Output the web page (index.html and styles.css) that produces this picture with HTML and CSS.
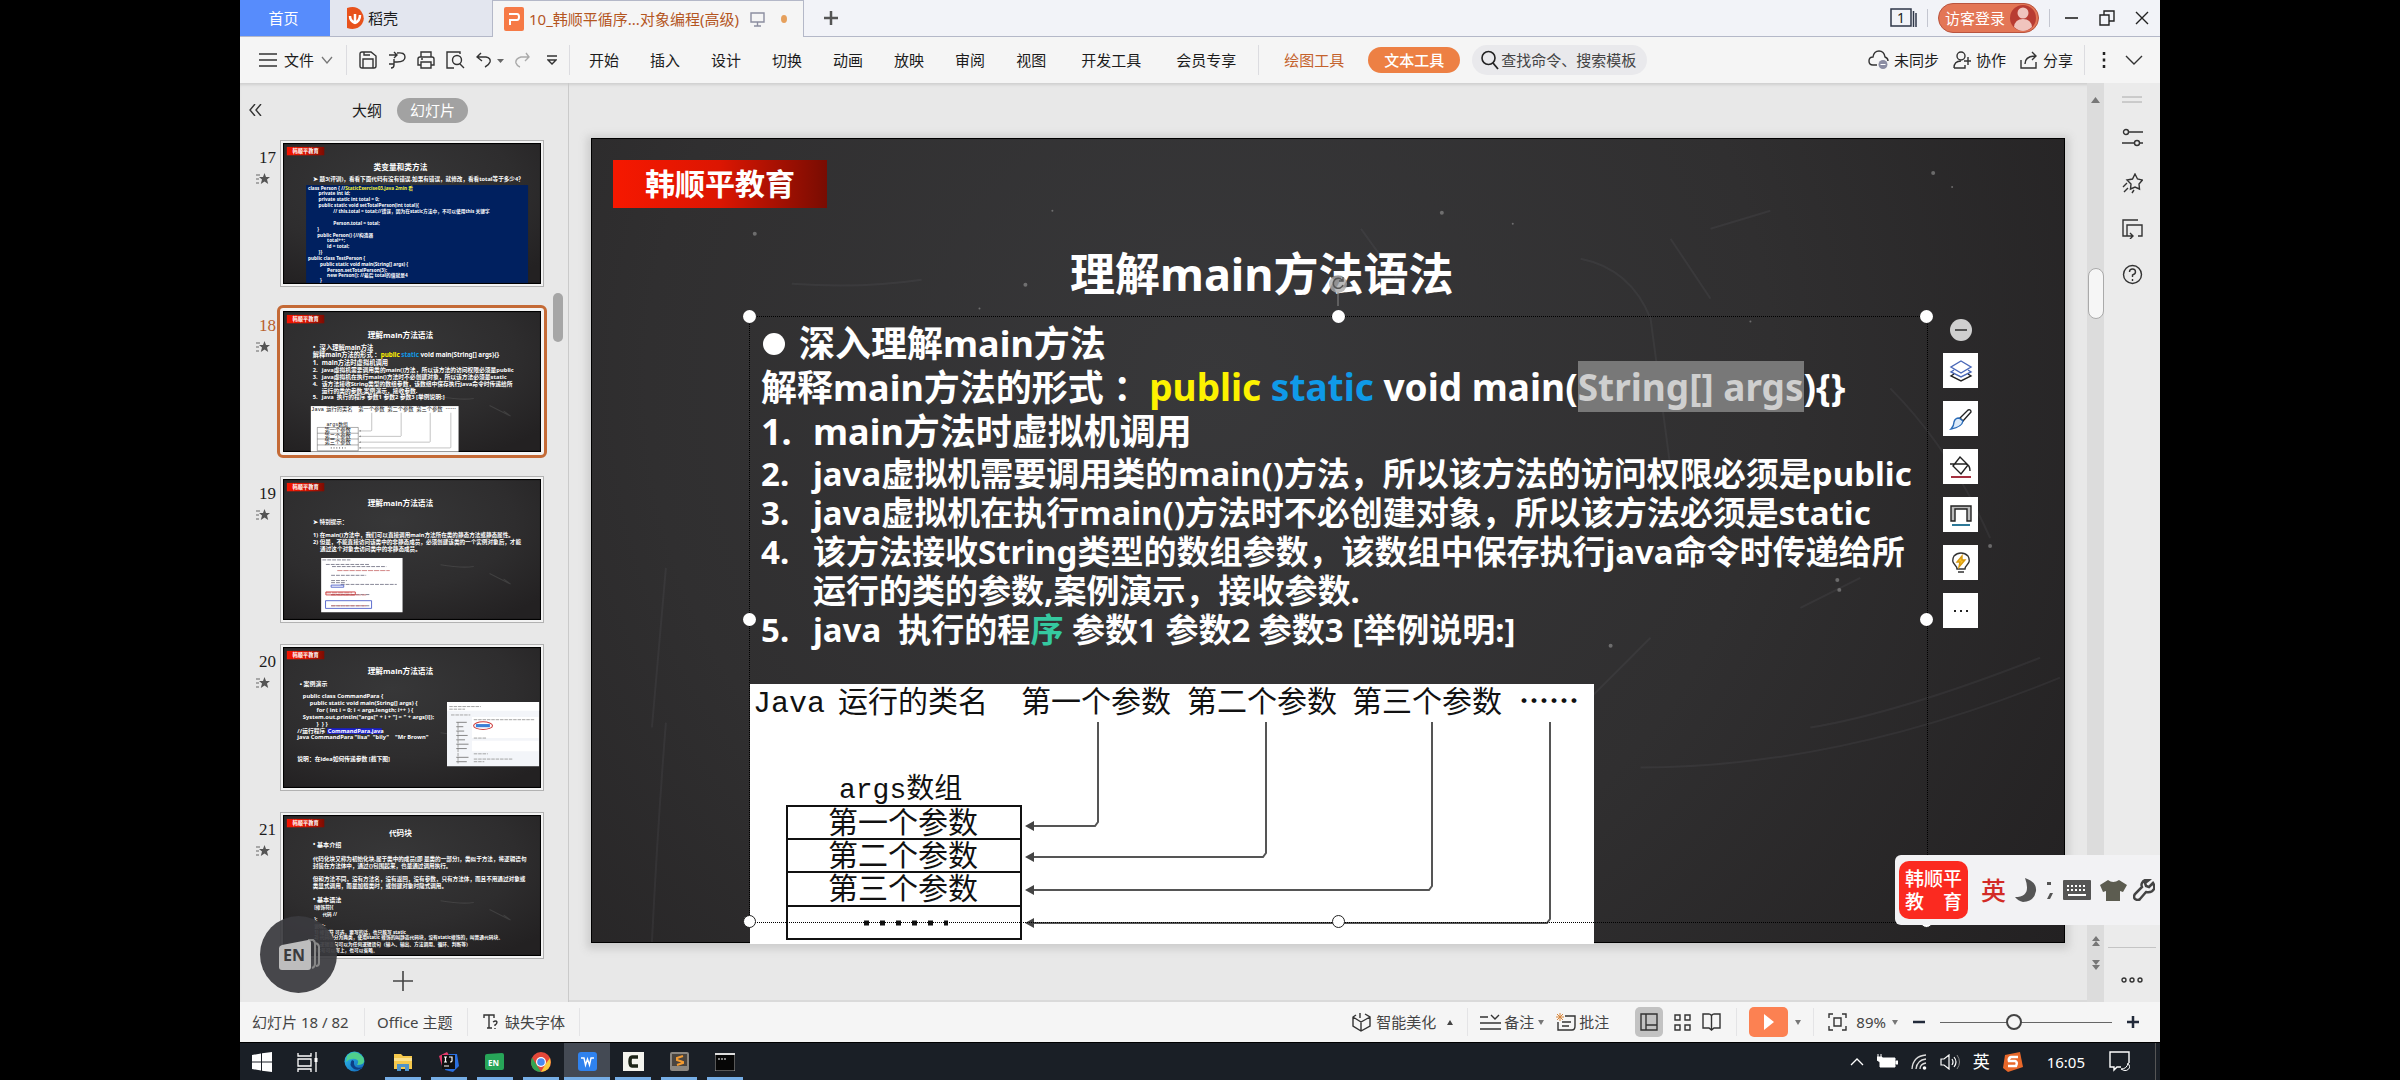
FILE: index.html
```html
<!DOCTYPE html>
<html lang="zh-CN">
<head>
<meta charset="utf-8">
<title>10_韩顺平循序...对象编程(高级)</title>
<link rel="stylesheet" href="styles.css">
</head>
<body>
<svg class="defs" aria-hidden="true">
  <defs>
    <linearGradient id="logo-fill"><stop offset="0" stop-color="#f41500"/><stop offset=".5" stop-color="#d81400"/><stop offset="1" stop-color="#7c0c02"/></linearGradient>
    <radialGradient id="board" cx=".42" cy=".3" r=".8"><stop offset="0" stop-color="#373738"/><stop offset=".6" stop-color="#2e2d2e"/><stop offset="1" stop-color="#232122"/></radialGradient>
    <linearGradient id="edge-blue" x1="0" y1="0" x2="1" y2="1"><stop offset="0" stop-color="#2fc3ee"/><stop offset="1" stop-color="#1160b8"/></linearGradient>
  </defs>
  <symbol id="thumb-base" viewBox="0 0 1474 805">
    <rect width="1474" height="805" fill="url(#board)" stroke="#000" stroke-width="12"/>
    <path d="M900 490q120 20 190 10M1180 540l120 60-40-30" stroke="#555" stroke-width="6" fill="none" opacity=".5"/>
    <rect x="22" y="22" width="214" height="48" fill="url(#logo-fill)"/>
  </symbol>
  <symbol id="anim-star" viewBox="0 0 14 12"><path d="M0 2h4M0 6h3M0 10h3" stroke="#666" stroke-width="1"/><path d="M8.500 0l1.500 4h4l-3 2.600 1.200 4.400-3.700-2.600L4.800 11 6 6.600 3 4h4z" fill="#555"/></symbol>
</svg>

<div class="screen">
  <header class="tabs">
    <button class="tab home">首页</button>
    <button class="tab docer">
      <svg width="17" height="24" viewBox="0 0 17 24"><path d="M0 2q9-3 14 3 5 7 1 13-5 7-15 4z" fill="#e8521c"/><path d="M8 18V8M8 17Q3 15 3 10M8 17q5-2 5-8" stroke="#fff" stroke-width="2.500" fill="none"/></svg>
      稻壳
    </button>
    <button class="tab doc">
      <svg width="20" height="24" viewBox="0 0 20 24"><rect width="20" height="24" rx="2" fill="#f67a46"/><path d="M5 7h8q2 0 2 3t-2 3H6v5" fill="none" stroke="#fff" stroke-width="2"/></svg>
      <span>10_韩顺平循序...对象编程(高级)</span>
      <svg width="15" height="15" viewBox="0 0 15 15"><path d="M1 1h13v9H1zM7.500 10v4M4 14h7" fill="none" stroke="#8c8ea0" stroke-width="1.400"/></svg>
      <i class="unsaved"></i>
    </button>
    <button class="tab-add" aria-label="新建"><svg width="16" height="16" viewBox="0 0 16 16"><path d="M8 1v14M1 8h14" stroke="#555" stroke-width="2.500"/></svg></button>
    <div class="window-tools">
      <button aria-label="窗口列表"><svg width="27" height="20" viewBox="0 0 27 20"><path d="M1 1h20v17H1zM23.500 3v16M26 5v14" fill="none" stroke="#2f3748" stroke-width="1.500"/><text x="7" y="15" class="count">1</text></svg></button>
      <i class="rule short"></i>
      <button class="login">访客登录<svg width="26" height="28" viewBox="0 0 26 28"><circle cx="13" cy="14" r="13" fill="#b83c32"/><circle cx="13" cy="9" r="5.500" fill="#f0c4bd"/><path d="M4 23q1-8 9-8t9 8q-9 8-18 0z" fill="#f0c4bd"/></svg></button>
      <i class="rule short"></i>
      <button aria-label="最小化"><svg width="14" height="14" viewBox="0 0 14 14"><path d="M0 7h13" stroke="#222" stroke-width="1.600"/></svg></button>
      <button aria-label="还原"><svg width="16" height="16" viewBox="0 0 16 16"><path d="M1 5h9v10H1zM5 5V1h10v10h-5" fill="none" stroke="#222" stroke-width="1.400"/></svg></button>
      <button aria-label="关闭"><svg width="14" height="14" viewBox="0 0 14 14"><path d="M1 1l12 12M13 1 1 13" stroke="#222" stroke-width="1.400"/></svg></button>
    </div>
  </header>

  <nav class="ribbon">
    <button class="file-menu">
      <svg width="18" height="14" viewBox="0 0 18 14"><path d="M0 1h18M0 7h18M0 13h18" stroke="#333" stroke-width="1.500"/></svg>
      文件
      <svg width="12" height="8" viewBox="0 0 12 8"><path d="M1 1l5 6 5-6" fill="none" stroke="#777" stroke-width="1.300"/></svg>
    </button>
    <i class="rule"></i>
    <div class="quick">
      <button aria-label="保存"><svg width="18" height="18" viewBox="0 0 18 18"><path d="M3 1h9l5 4v10q0 2-2 2H3q-2 0-2-2V3q0-2 2-2zM4 17V8h10v9M5 1v3h6" class="ln"/></svg></button>
      <button aria-label="输出为PDF"><svg width="18" height="18" viewBox="0 0 18 18"><path d="M1 4h8M6 1l3 3-3 3M9 2q8-1 8 4t-8 5H6v3q0 3-3 3M6 8v5H1" class="ln"/></svg></button>
      <button aria-label="打印"><svg width="18" height="18" viewBox="0 0 18 18"><path d="M4 6V1h10v5M4 14H1V8q0-2 2-2h12q2 0 2 2v6h-3M4 11h10v6H4zM4 8h2" class="ln"/></svg></button>
      <button aria-label="打印预览"><svg width="19" height="18" viewBox="0 0 19 18"><path d="M14 3V1H1v16h7M14 13l4 4" class="ln"/><circle cx="11" cy="9" r="4.500" class="ln"/></svg></button>
      <button aria-label="撤销"><svg width="28" height="16" viewBox="0 0 28 16"><path d="M5 1 1 5l5 4M1 5h9q5 1 4 5-1 3-5 5" class="ln"/><path d="M21 7h7l-3.500 4z" fill="#666"/></svg></button>
      <button aria-label="恢复" class="off"><svg width="15" height="16" viewBox="0 0 15 16"><path d="M11 1l3 4-4 4M14 5H6Q0 7 1 11q1 3 4 4" class="ln"/></svg></button>
      <button aria-label="自定义快速访问工具栏"><svg width="10" height="12" viewBox="0 0 10 12"><path d="M0 2h10M1 6l4 4 4-4z" class="ln"/></svg></button>
    </div>
    <i class="rule"></i>
    <div class="menus"><button>开始</button><button>插入</button><button>设计</button><button>切换</button><button>动画</button><button>放映</button><button>审阅</button><button>视图</button></div>
    <div class="menus wide"><button>开发工具</button><button>会员专享</button></div>
    <i class="rule"></i>
    <button class="draw-tools">绘图工具</button>
    <button class="text-tools">文本工具</button>
    <label class="search"><svg width="18" height="20" viewBox="0 0 18 20"><circle cx="7.500" cy="8" r="6.500" fill="none" stroke="#222" stroke-width="1.600"/><path d="M12 13l5 6" stroke="#222" stroke-width="1.800"/></svg><input type="text" placeholder="查找命令、搜索模板" aria-label="查找命令、搜索模板"></label>
    <div class="ribbon-right">
      <button><svg width="21" height="20" viewBox="0 0 21 20"><path d="M9 15H5q-4 0-4-4t4-4q1-6 6-6t6 6q3 1 3 4" class="ln"/><circle cx="15" cy="14.500" r="4.500" fill="#8b8da3"/><path d="M12.500 14.500h5" stroke="#fff"/></svg>未同步</button>
      <button><svg width="18" height="18" viewBox="0 0 18 18"><circle cx="8" cy="5" r="4" class="ln"/><path d="M1 17q0-7 7-7M1 17h11v-3M15 6v8M11 10h7" class="ln"/></svg>协作</button>
      <button><svg width="18" height="18" viewBox="0 0 18 18"><path d="M1 9v8h15v-6M5 13q0-8 11-8M12 1l4 4-4 4" class="ln"/></svg>分享</button>
      <i class="rule"></i>
      <button aria-label="更多"><svg width="4" height="16" viewBox="0 0 4 16"><path d="M2 0v3M2 6.500v3M2 13v3" stroke="#222" stroke-width="2.500"/></svg></button>
      <button class="fold" aria-label="折叠功能区"><svg width="18" height="11" viewBox="0 0 18 11"><path d="M1 1l8 8 8-8" class="ln"/></svg></button>
    </div>
  </nav>

  <main class="work">
    <aside class="panel">
      <div class="panel-head">
        <button class="collapse" aria-label="收起"><svg width="13" height="12" viewBox="0 0 13 12"><path d="M6 0 1 6l5 6M12 0 7 6l5 6" class="ln"/></svg></button>
        <button>大纲</button>
        <button class="on">幻灯片</button>
      </div>
      <ol class="thumbs">
        <li><div class="mark"><b>17</b><svg width="14" height="12"><use href="#anim-star"/></svg></div>
          <button class="thumb" aria-label="幻灯片 17"><svg viewBox="0 0 1474 805">
            <use href="#thumb-base"/><text x="54" y="57" font-size="30">韩顺平教育</text>
            <text x="671" y="153" class="t">类变量和类方法</text>
            <text x="172" y="214" font-size="32">➤ 题3(评训)，看看下面代码有没有错误,如果有错误，就修改，看看total等于多少4？</text>
            <rect x="132" y="240" width="1268" height="559" fill="#00205f"/>
            <g font-size="27">
            <text x="143" y="266">class Person { //<tspan fill="#f5ef3a">StaticExercise03.java 2min 看</tspan></text>
            <text x="203" y="299">private int id;</text><text x="203" y="333">private static int total = 0;</text>
            <text x="203" y="366">public static void setTotalPerson(int total){</text>
            <text x="287" y="400">// this.total = total;//错误，因为在static方法中，不可以使用this 关键字</text>
            <text x="287" y="467">Person.total = total;</text><text x="195" y="500">}</text>
            <text x="195" y="534">public Person() {//构造器</text><text x="252" y="567">total++;</text><text x="252" y="600">id = total;</text><text x="203" y="634">}}</text>
            <text x="143" y="668">public class TestPerson {</text><text x="212" y="701">public static void main(String[] args) {</text>
            <text x="252" y="734">Person.setTotalPerson(3);</text><text x="252" y="767">new Person(); //最后 total的值就是4</text><text x="212" y="796">}</text></g>
          </svg></button></li>
        <li class="current"><div class="mark"><b>18</b><svg width="14" height="12"><use href="#anim-star"/></svg></div>
          <button class="thumb" aria-label="幻灯片 18"><svg viewBox="0 0 1474 805">
            <use href="#thumb-base"/><text x="54" y="57" font-size="30">韩顺平教育</text>
            <text x="671" y="153" class="t">理解main方法语法</text>
            <g font-size="36"><text x="172" y="220">•</text><text x="209" y="220">深入理解main方法</text>
            <text x="170" y="264">解释main方法的形式 ：<tspan fill="#fdf200">public</tspan> <tspan fill="#0f9ae8">static</tspan> void main(String[] args){}</text>
            <text x="170" y="308">1.</text><text x="222" y="308">main方法时虚拟机调用</text></g>
            <g font-size="33"><text x="170" y="348">2.</text><text x="222" y="348">java虚拟机需要调用类的main()方法，所以该方法的访问权限必须是public</text>
            <text x="170" y="387">3.</text><text x="222" y="387">java虚拟机在执行main()方法时不必创建对象，所以该方法必须是static</text>
            <text x="170" y="427">4.</text><text x="222" y="427">该方法接收String类型的数组参数，该数组中保存执行java命令时传递给所</text>
            <text x="222" y="466">运行的类的参数,案例演示，接收参数.</text>
            <text x="170" y="505">5.</text><text x="222" y="505">java&#160; 执行的程序 参数1 参数2 参数3 [举例说明:]</text></g>
            <use href="#param-figure" x="159" y="543"/>
          </svg></button></li>
        <li><div class="mark"><b>19</b><svg width="14" height="12"><use href="#anim-star"/></svg></div>
          <button class="thumb" aria-label="幻灯片 19"><svg viewBox="0 0 1474 805">
            <use href="#thumb-base"/><text x="54" y="57" font-size="30">韩顺平教育</text>
            <text x="671" y="153" class="t">理解main方法语法</text>
            <g font-size="32"><text x="172" y="256">➤ 特别提示：</text>
            <text x="172" y="333">1) 在main()方法中，我们可以直接调用main方法所在类的静态方法或静态属性。</text>
            <text x="172" y="371">2) 但是，不能直接访问该类中的非静态成员，必须创建该类的一个实例对象后，才能</text>
            <text x="212" y="409">通过这个对象去访问类中的非静态成员。</text></g>
            <rect x="218" y="451" width="465" height="310" fill="#fff"/>
            <g stroke-width="5" fill="none"><path d="M225 462h160M245 488h250M280 500h310M275 550h200M275 580h90M275 592h80M330 602h320M275 660h220M275 724h220" stroke="#778" stroke-dasharray="22 6"/><path d="M310 523h300M245 650h150M275 662h200M275 724h200" stroke="#c77" stroke-dasharray="30 5"/><path d="M275 606h72v12h-72zM243 695h263v44H243z" stroke="#4a5dc8"/><path d="M245 645h168v17H245z" stroke="#c33"/></g>
          </svg></button></li>
        <li><div class="mark"><b>20</b><svg width="14" height="12"><use href="#anim-star"/></svg></div>
          <button class="thumb" aria-label="幻灯片 20"><svg viewBox="0 0 1474 805">
            <use href="#thumb-base"/><text x="54" y="57" font-size="30">韩顺平教育</text>
            <text x="671" y="153" class="t">理解main方法语法</text>
            <text x="96" y="220" font-size="34">• 案例演示</text>
            <g font-size="33"><text x="113" y="291">public class CommandPara {</text><text x="153" y="331">public static void main(String[] args) {</text>
            <text x="191" y="370">for ( int i = 0; i &lt; args.length; i++ ) {</text><text x="113" y="410">System.out.println("args[" + i + "] = " + args[i]);</text>
            <text x="191" y="449">} &#160;} }</text><text x="82" y="489">//运行程序</text><rect x="252" y="464" width="312" height="32" fill="#1a1fd0"/><text x="256" y="489" fill="#0b0f80">CommandPara.java</text>
            <text x="82" y="528">java CommandPara "lisa" &#160;"bily" &#160; &#160;"Mr Brown"</text>
            <text x="82" y="650">说明：在idea如何传递参数 [截下图]</text></g>
            <rect x="937" y="314" width="526" height="367" fill="#f3f5f9"/><path d="M937 314h526v50H937zM1080 400h380v120h-380zM1080 535h380v60h-380z" fill="#fff"/>
            <path d="M950 340h180M950 355h90M960 388h110M1090 415h350M1000 430v235M1090 520h70M1090 610h80M1090 640h220M1090 655h60" stroke="#999" stroke-width="5" stroke-dasharray="20 5" fill="none"/>
            <path d="M990 430h60M990 455h40M990 480h45M990 505h65M990 530h50M990 555h70M990 580h60M990 630h70M990 655h60" stroke="#777" stroke-width="5"/>
            <rect x="1102" y="440" width="80" height="18" fill="#3b7fd6"/><ellipse cx="1143" cy="449" rx="54" ry="22" fill="none" stroke="#cc3a3a" stroke-width="6"/>
          </svg></button></li>
        <li><div class="mark"><b>21</b><svg width="14" height="12"><use href="#anim-star"/></svg></div>
          <button class="thumb" aria-label="幻灯片 21"><svg viewBox="0 0 1474 805">
            <use href="#thumb-base"/><text x="54" y="57" font-size="30">韩顺平教育</text>
            <text x="671" y="119" class="t">代码块</text>
            <g font-size="35"><text x="172" y="184">• 基本介绍</text><text x="172" y="499">• 基本语法</text></g>
            <g font-size="32"><text x="170" y="264">代码化块又称为初始化块,属于类中的成员[即 是类的一部分]，类似于方法，将逻辑语句</text>
            <text x="170" y="302">封装在方法体中，通过{}包围起来，也是通过调用执行。</text>
            <text x="170" y="378">但和方法不同，没有方法名，没有返回，没有参数，只有方法体，而且不用通过对象或</text>
            <text x="170" y="417">类显式调用，而是加载类时，或创建对象时隐式调用。</text></g>
            <g font-size="27"><text x="178" y="537">[修饰符]{</text><text x="225" y="574">代码 //</text><text x="178" y="608">};</text><text x="178" y="644">说明：</text>
            <text x="178" y="677">1) 修饰符 可选，要写的话，也只能写 static</text><text x="178" y="711">2) 代码块分为两类，使用static 修饰的叫静态代码块，没有static修饰的，叫普通代码块。</text>
            <text x="178" y="746">3) 逻辑语句可以为任何逻辑语句（输入、输出、方法调用、循环、判断等）</text><text x="178" y="780">4) ;号可以写上，也可以省略。</text></g>
          </svg></button></li>
      </ol>
      <button class="add-slide" aria-label="新建幻灯片"><svg width="20" height="20" viewBox="0 0 20 20"><path d="M10 0v20M0 10h20" stroke="#444" stroke-width="1.600"/></svg></button>
      <i class="panel-scroll"></i>
    </aside>

    <section class="canvas">
      <article class="slide">
        <svg class="chalk" viewBox="0 0 1474 805" preserveAspectRatio="none" aria-hidden="true">
          <g fill="none" stroke="#8a8a90" stroke-width="2" opacity=".1"><path d="M200 145q70 5 130-4M60 590l14-160M60 805q6-120 14-220M1220 590q90-15 230-70M1050 630q200 0 420-90M990 120q50 10 70 60l20 150M1000 560l60-60M770 90l36 50M1080 100l40 60M1300 250q60 60 100 150M690 560q-20 110-60 150M1210 470l60-30M1120 90l60-18"/></g>
          <g fill="#aaa" opacity=".5"><circle cx="434" cy="146" r="2"/><circle cx="461" cy="72" r="1"/><circle cx="163" cy="95" r="2"/><circle cx="388" cy="170" r="1"/><circle cx="922" cy="85" r="1"/><circle cx="851" cy="74" r="2"/><circle cx="1343" cy="34" r="2"/><circle cx="1362" cy="48" r="1"/><circle cx="1247" cy="442" r="2"/><circle cx="1249" cy="452" r="2"/><circle cx="1400" cy="408" r="2"/><circle cx="1160" cy="183" r="1"/><circle cx="1020" cy="508" r="2"/></g>
        </svg>
        <div class="brand">韩顺平教育</div>
        <h1>理解main方法语法</h1>
        <div class="text-box">
          <p class="bullet"><i></i>深入理解main方法</p>
          <p>解释main方法的形式 ：<span class="code"><span class="yellow">public</span> <span class="blue">static</span> void main(<mark>String[] args</mark>){}</span></p>
          <p class="item"><span>1.</span>main方法时虚拟机调用</p>
          <p class="item small"><span>2.</span>java虚拟机需要调用类的main()方法，所以该方法的访问权限必须是public</p>
          <p class="item small"><span>3.</span>java虚拟机在执行main()方法时不必创建对象，所以该方法必须是static</p>
          <p class="item small"><span>4.</span>该方法接收String类型的数组参数，该数组中保存执行java命令时传递给所<br>运行的类的参数,案例演示，接收参数.</p>
          <p class="item small"><span>5.</span>java&nbsp; 执行的程<em>序</em> 参数1 参数2 参数3 [举例说明:]</p>
        </div>
        <svg class="figure" viewBox="0 0 844 260">
          <g id="param-figure">
            <rect width="844" height="260" fill="#fff"/>
            <g class="fig-text">
              <text x="3" y="28">Java</text><text x="88" y="28">运行的类名</text>
              <text x="271" y="28">第一个参数</text><text x="437" y="28">第二个参数</text><text x="602" y="28">第三个参数</text><text x="769" y="28" class="fig-dots">……</text>
              <text x="89" y="114" class="fig-small">args数组</text>
              <text x="78" y="149">第一个参数</text><text x="78" y="182">第二个参数</text><text x="78" y="215">第三个参数</text>
            </g>
            <path d="M37 122h234v133H37zM37 155h234M37 188h234M37 222h234" fill="none" stroke="#111" stroke-width="2"/>
            <path d="M114 239h84" stroke="#111" stroke-width="5" stroke-dasharray="5 11" fill="none"/>
            <g fill="none" stroke="#555" stroke-width="2">
              <path d="M348 38v100l-3 4H284"/><path d="M516 38v131l-3 4H284"/><path d="M682 38v164l-3 4H284"/><path d="M800 38v197l-3 4H284"/>
            </g>
            <path d="M275 142l9-5v10zM275 173l9-5v10zM275 206l9-5v10zM275 239l9-5v10z" fill="#444"/>
          </g>
        </svg>
        <div class="selection">
          <i class="h tl"></i><i class="h tc"></i><i class="h tr"></i><i class="h ml"></i><i class="h mr"></i><i class="h bl"></i><i class="h bc"></i><i class="h br"></i>
          <svg class="rotate" width="20" height="34" viewBox="0 0 20 34"><path d="M10 18v14" stroke="#888"/><circle cx="10" cy="10" r="9" fill="#a9a9a9" opacity=".8"/><path d="M14 6a5 5 0 1 0 1 5M15 3v4h-4" fill="none" stroke="#555" stroke-width="1.500"/></svg>
        </div>
        <div class="float-tools">
          <button class="minus" aria-label="收起"><svg width="22" height="22" viewBox="0 0 22 22"><circle cx="11" cy="11" r="11" fill="#cfcfcf"/><path d="M5 11h12" stroke="#555" stroke-width="2"/></svg></button>
          <button aria-label="图层"><svg width="24" height="24" viewBox="0 0 24 24" fill="none" stroke-width="1.400"><path d="M12 2l10 6-10 6L2 8z" stroke="#4a68b8"/><path d="M5 11l-3 2 10 5 10-5-3-2" stroke="#4a68b8"/><path d="M5 15l-3 2 10 5 10-5-3-2" stroke="#222"/></svg></button>
          <button aria-label="样式"><svg width="24" height="24" viewBox="0 0 24 24" fill="none" stroke-width="1.400"><path d="M11 11l8-8q3-1 3 2l-8 9z" stroke="#222"/><path d="M10 11l4 3q-1 6-12 8 3-3 3-7 1-4 5-4z" stroke="#2b6cb8" fill="#dcebfa"/></svg></button>
          <button aria-label="填充"><svg width="24" height="24" viewBox="0 0 24 24" fill="none" stroke-width="1.400"><path d="M11 2l8 8-7 9-8-8zM1 9h16q4 1 4 7" stroke="#222"/><path d="M2 22h20" stroke="#a4303f" stroke-width="2"/></svg></button>
          <button aria-label="轮廓"><svg width="24" height="24" viewBox="0 0 24 24" fill="none" stroke-width="1.400"><path d="M2 18V3h20v15h-4V6H6v12z" stroke="#222" fill="#bbb"/><path d="M3 22h18" stroke="#2d7897" stroke-width="2"/></svg></button>
          <button aria-label="智能"><svg width="24" height="24" viewBox="0 0 24 24" fill="none" stroke-width="1.400"><path d="M8 18q0-2-2-4-4-4-1-9 3-3 7-3t7 3q3 5-1 9-2 2-2 4zM9 21h6" stroke="#333"/><path d="M13 5l-5 6h3l-1 5 6-7h-3z" fill="#f8c02a" stroke="#d89a10"/></svg></button>
          <button aria-label="更多"><svg width="24" height="24" viewBox="0 0 24 24"><path d="M5 12h2M11 12h2M17 12h2" stroke="#222" stroke-width="2"/></svg></button>
        </div>
      </article>
    </section>

    <div class="v-scroll">
      <svg width="9" height="8" viewBox="0 0 9 8"><path d="M0 7 4.500 1 9 7z" fill="#777"/></svg>
      <i></i>
      <svg class="page-keys" width="8" height="34" viewBox="0 0 8 34"><path d="M0 5l4-5 4 5zM0 10l4-5 4 5zM0 24h8l-4 5zM0 29h8l-4 5z" fill="#777"/></svg>
    </div>

    <aside class="side">
      <svg width="20" height="7" viewBox="0 0 20 7"><path d="M0 1h20M0 6h20" stroke="#aaa"/></svg>
      <button aria-label="对象属性"><svg width="21" height="20" viewBox="0 0 21 20"><circle cx="4" cy="4" r="2.500" class="ln"/><path d="M7 4h14M0 15h12M17 15h4" class="ln"/><circle cx="15" cy="15" r="2.500" class="ln"/></svg></button>
      <button aria-label="动画"><svg width="21" height="21" viewBox="0 0 21 21"><path d="M13 1l2.500 5 5 1-3.500 4 .5 5-4.500-2-4.500 2 .5-5L5 7l5.500-1zM5 10l-4 4M6 15l-4 4M12 17l-2 3" class="ln"/></svg></button>
      <button aria-label="切换"><svg width="21" height="20" viewBox="0 0 21 20"><path d="M5 17H1V1h15M5 13V6h15v11h-4M5 12v5h6M8 14l3 3-3 3" class="ln"/></svg></button>
      <button aria-label="帮助"><svg width="21" height="21" viewBox="0 0 21 21"><circle cx="10.500" cy="10.500" r="9" class="ln"/><path d="M7.500 8q0-3 3-3t3 3q0 2-3 3v2M10.500 15v2" class="ln"/></svg></button>
      <div class="side-more"><svg width="22" height="6" viewBox="0 0 22 6"><circle cx="3" cy="3" r="2" class="ln"/><circle cx="11" cy="3" r="2" class="ln"/><circle cx="19" cy="3" r="2" class="ln"/></svg></div>
    </aside>

    <div class="en-badge"><svg width="42" height="32" viewBox="0 0 42 32"><path d="M30 1h5q2 1 2 4v20q0 3-3 4M37 4q4 1 4 4v16q0 3-3 3" fill="none" stroke="#888" stroke-width="2"/><path d="M4 6l26-5q3 0 3 3v24q0 3-3 3H4q-3 0-3-3V9q0-2 3-3z" fill="#bdbdbd"/><text x="5" y="22">EN</text></svg></div>

    <div class="ime">
      <b class="ime-logo">韩顺平<br>教　育</b>
      <b class="ime-lang">英</b>
      <svg width="22" height="26" viewBox="0 0 22 26"><path d="M10 1q12 4 11 13-2 11-13 11-5-1-8-5 17 0 10-19z" fill="#555"/></svg>
      <svg width="8" height="20" viewBox="0 0 8 20"><path d="M1 2h4v3H1zM4 13h3l-3 6H1z" fill="#555"/></svg>
      <svg width="28" height="20" viewBox="0 0 28 20"><rect width="28" height="20" rx="1" fill="#555"/><path d="M4 6h20M4 10h20" stroke="#fff" stroke-width="2" stroke-dasharray="2 2"/><path d="M5 15h18" stroke="#fff" stroke-width="2"/></svg>
      <svg width="27" height="22" viewBox="0 0 27 22"><path d="M8 1q5 4 11 0l8 5-4 7-3-1v10H6V12l-3 1-3-7z" fill="#5c5c50"/></svg>
      <svg width="22" height="22" viewBox="0 0 22 22"><path d="M20 4l-4 4-3-1-1-3 4-3q-5-1-7 3-1 2 0 4l-7 7q-2 3 0 5 3 2 5 0l6-7q6 1 8-3 1-3-1-6z" fill="none" stroke="#444" stroke-width="2.500"/></svg>
    </div>
  </main>

  <footer class="status">
    <span class="s1">幻灯片 18 / 82</span><i class="rule"></i>
    <span class="s2">Office 主题</span><i class="rule"></i>
    <button class="s3"><svg width="15" height="16" viewBox="0 0 15 16"><path d="M1 4V1h10v3M6 1v13M4 14h5M10 8q3-2 4 0 0 2-2 3v1M12 14v1" class="ln"/></svg>缺失字体</button><i class="rule"></i>
    <div class="status-right">
      <button class="beauty"><svg width="19" height="20" viewBox="0 0 19 20"><path d="M4 3 1 5v9l8 5 9-5V5l-5-3M1 5l8 5 9-5M9 10v9M8 1v5" class="ln"/></svg>智能美化<svg width="6" height="5" viewBox="0 0 6 5"><path d="M0 5l3-5 3 5z" fill="#444"/></svg></button>
      <i class="rule"></i>
      <button class="notes"><svg width="21" height="16" viewBox="0 0 21 16"><path d="M0 3h8M11 1l4 4 4-4M0 9h21M0 15h21" class="ln"/></svg>备注<svg width="6" height="5" viewBox="0 0 6 5"><path d="M0 0h6L3 5z" fill="#777"/></svg></button>
      <button class="comment"><svg width="20" height="18" viewBox="0 0 20 18"><path d="M9 3h10v10q0 4-3 4H2V9M6 9h9M6 13h7" class="ln"/><path d="M4 0v8M0 4h8M1 1l6 6M7 1 1 7" stroke="#d8863a"/></svg>批注</button>
      <div class="views">
        <button class="on" aria-label="普通视图"><svg width="18" height="18" viewBox="0 0 18 18"><path d="M1 1h16v16H1zM6 1v16M6 12h11" class="ln"/></svg></button>
        <button aria-label="幻灯片浏览"><svg width="17" height="17" viewBox="0 0 17 17"><path d="M1 1h5v5H1zM11 1h5v5h-5zM1 11h5v5H1zM11 11h5v5h-5z" class="ln"/></svg></button>
        <button aria-label="阅读视图"><svg width="19" height="18" viewBox="0 0 19 18"><path d="M1 1h6q2 0 2.500 2Q10 1 12 1h6v14h-6l-2.500 2L7 15H1zM9.500 3v13" class="ln"/></svg></button>
      </div>
      <i class="rule"></i>
      <button class="play" aria-label="从当前幻灯片播放"><svg width="12" height="16" viewBox="0 0 12 16"><path d="M1 0l10 8L1 16z" fill="#fff"/></svg></button>
      <svg width="6" height="5" viewBox="0 0 6 5"><path d="M0 0h6L3 5z" fill="#777"/></svg>
      <i class="rule"></i>
      <button class="zoom"><svg width="19" height="18" viewBox="0 0 19 18"><path d="M1 5V1h4M14 1h4v4M18 13v4h-4M5 17H1v-4M6 5h7v8H6z" class="ln"/></svg><span>89%</span><svg width="6" height="5" viewBox="0 0 6 5"><path d="M0 0h6L3 5z" fill="#777"/></svg></button>
      <button aria-label="缩小"><svg width="12" height="12" viewBox="0 0 12 12"><path d="M0 6h12" stroke="#222a3a" stroke-width="2.500"/></svg></button>
      <input class="zoom-bar" type="range" min="0" max="100" value="42" aria-label="缩放">
      <button aria-label="放大"><svg width="12" height="12" viewBox="0 0 12 12"><path d="M0 6h12M6 0v12" stroke="#222a3a" stroke-width="2.500"/></svg></button>
    </div>
  </footer>

  <nav class="taskbar">
    <button aria-label="开始"><svg width="20" height="20" viewBox="0 0 20 20"><path d="M0 3l9-1.500V9.500H0zM10 1.300 20 0v9.500H10zM0 10.500h9v8L0 17zM10 10.500h10V20l-10-1.300z" fill="#fff"/></svg></button>
    <button aria-label="任务视图"><svg width="22" height="20" viewBox="0 0 22 20"><path d="M1 1v3h13V1M1 7h13v7H1zM1 20v-3h13v3M19 0v20" fill="none" stroke="#fff" stroke-width="1.300"/><path d="M17.500 6h3v4h-3z" fill="#fff"/></svg></button>
    <button aria-label="Edge"><svg width="21" height="21" viewBox="0 0 21 21"><circle cx="10.500" cy="10.500" r="10" fill="url(#edge-blue)"/><path d="M3 5q8-8 16 1 4 8-6 8 3-5-2-6-5-1-9 3" fill="#4fcf8c"/><path d="M8 9q-4 5 2 9 5 2 9-2-10 3-9-6z" fill="#0d3f86"/></svg></button>
    <button class="run" aria-label="资源管理器"><svg width="20" height="18" viewBox="0 0 20 18"><path d="M1 1h7l2 2h9v13H1z" fill="#f5c84c"/><path d="M1 5h18v3H1z" fill="#fbe08a"/><path d="M4 18v-7h12v7h-4v-4H8v4z" fill="#4f93c9"/></svg></button>
    <button class="run" aria-label="IntelliJ IDEA"><svg width="20" height="20" viewBox="0 0 20 20"><path d="M0 4l8-4 4 6-3 12-6-4z" fill="#e23a6a"/><path d="M10 2h8l2 12-6 6-8-2z" fill="#2a6fe0"/><path d="M3 3h13v14H3z" fill="#111"/><path d="M5 5h3M6.500 5v5M5 10h3M10 5h3v4q0 1-2 1M5 14h5" stroke="#fff" stroke-width="1.200" fill="none"/></svg></button>
    <button class="run" aria-label="EN"><svg width="20" height="18" viewBox="0 0 20 18"><path d="M2 1l15-1q2 0 2 2v13q0 2-2 2H2q-2 0-2-2V3q0-2 2-2z" fill="#27a558"/><text x="3" y="13" class="en-ic">EN</text></svg></button>
    <button class="run" aria-label="Chrome"><svg width="20" height="20" viewBox="0 0 20 20"><circle cx="10" cy="10" r="10" fill="#e4483a"/><path d="M1 5.500 10 20Q2 20 0 12 0 8 1 5.500z" fill="#34a552"/><path d="M10 20l4.500-8L19 6q3 12-9 14z" fill="#f9ca3b"/><circle cx="10" cy="10" r="5" fill="#fff"/><circle cx="10" cy="10" r="3.800" fill="#4a8af0"/></svg></button>
    <button class="run active" aria-label="WPS"><svg width="19" height="19" viewBox="0 0 19 19"><rect width="19" height="19" rx="3" fill="#2f82ee"/><path d="M3 6h3l1.500 7L9.500 7l2 6L13 6h3" fill="none" stroke="#fff" stroke-width="1.400"/></svg></button>
    <button class="run" aria-label="Camtasia"><svg width="21" height="19" viewBox="0 0 21 19"><path d="M0 0h21v19H0z" fill="#f4f4ee"/><path d="M15 5H9q-2 0-2 4.500T9 14h6" fill="none" stroke="#1d2417" stroke-width="3.500"/></svg></button>
    <button class="run" aria-label="Sublime Text"><svg width="19" height="19" viewBox="0 0 19 19"><rect width="19" height="19" rx="2" fill="#8b8781"/><path d="M2 2h15v12H2z" fill="#4a4540"/><path d="M13 4 7 6v2l6 2v1l-6 2" fill="none" stroke="#f39b31" stroke-width="2"/></svg></button>
    <button class="run" aria-label="命令提示符"><svg width="20" height="18" viewBox="0 0 20 18"><path d="M0 0h20v18H0z" fill="#060606" stroke="#aaa"/><path d="M0 1h20" stroke="#ddd" stroke-width="2"/><path d="M3 6h9" stroke="#fff" stroke-dasharray="2 1"/></svg></button>
    <div class="tray">
      <svg width="14" height="9" viewBox="0 0 14 9"><path d="M1 8l6-6 6 6" fill="none" stroke="#fff" stroke-width="1.300"/></svg>
      <svg width="21" height="15" viewBox="0 0 21 15"><path d="M5 4h13v9H3V8" fill="#fff" stroke="#fff"/><path d="M19 7h2v3h-2zM0 3h5v3L3 8 0 6zM1 0v3M4 0v3" fill="#fff" stroke="#fff"/></svg>
      <svg width="16" height="16" viewBox="0 0 16 16"><path d="M1 15Q2 2 15 1M5 15q1-9 10-10M9 15q0-5 6-6" fill="none" stroke="#ddd" stroke-width="1.300"/><circle cx="13.500" cy="14" r="1.800" fill="#fff"/></svg>
      <svg width="20" height="16" viewBox="0 0 20 16"><path d="M1 5h3l5-4v14l-5-4H1zM12 5q2 3 0 6M14 3q4 5 0 10" fill="none" stroke="#fff" stroke-width="1.200"/><path d="M17 1q5 7 0 14" fill="none" stroke="#888"/></svg>
      <span class="lang">英</span>
      <svg width="20" height="20" viewBox="0 0 20 20"><path d="M2 3l15-3 3 15-15 5L0 16z" fill="#e9682a"/><path d="M15 5H8q-3 1-2 4h6q3 1 1 5H5" fill="none" stroke="#fff" stroke-width="2.500"/></svg>
      <time>16:05</time>
      <svg width="21" height="21" viewBox="0 0 21 21"><path d="M12 16H8l-3 3v-3H1V1h19v11" fill="none" stroke="#fff" stroke-width="1.400"/><path d="M19 12q-1 6-7 6 6 4 9-2z" fill="none" stroke="#fff"/></svg>
      <i></i>
    </div>
  </nav>
</div>
</body>
</html>
```
FILE: styles.css
```css
* { box-sizing: border-box; }

body {
  margin: 0;
  background: #000;
  color: #1c1c1c;
  font: 15px/20px "Noto Sans", "Noto Sans CJK SC", sans-serif;
}

button {
  display: inline-flex;
  align-items: center;
  margin: 0;
  padding: 0;
  border: 0;
  background: none;
  color: inherit;
  font: inherit;
  white-space: nowrap;
}

svg { display: block; flex: none; }
p, h1, ol { margin: 0; padding: 0; }
.defs { position: absolute; width: 0; height: 0; }
.ln { fill: none; stroke: #333; stroke-width: 1.4px; }
.off .ln { stroke: #aaa; }
.rule { flex: none; width: 1px; height: 30px; background: #dcdce0; }
.rule.short { height: 18px; background: #c4c6d0; }

.screen {
  display: flex;
  flex-direction: column;
  height: 100vh;
  margin: 0 10%;
  background: #e8e8e8;
  overflow: hidden;
}

/* document tabs */
.tabs {
  display: flex;
  flex: none;
  height: 37px;
  border-bottom: 1px solid #b4b8c8;
  background: #f2f3f8;
}
.tab { height: 36px; }
.home { width: 90px; justify-content: center; padding-right: 3px; background: #578cfc; color: #fff; }
.docer { width: 162px; gap: 4px; padding-left: 17px; background: #e3e6ef; }
.doc {
  width: 312px;
  height: 37px;
  gap: 11px;
  padding-left: 11px;
  border: 1px solid #b4b8c8;
  border-bottom: 0;
  background: #f5f5f5;
  color: #b4561f;
}
.doc span { flex: 1; margin-left: -6px; }
.unsaved { width: 8px; height: 8px; margin: 0 16px 0 5px; border-radius: 50%; background: #e6a05c; }
.tab-add { margin-left: 19px; }
.window-tools { display: flex; align-items: center; gap: 10px; margin-left: auto; padding-right: 6px; }
.window-tools button:nth-last-child(-n+3) { margin-left: 5px; margin-right: 5px; }
.count { font-size: 14px; fill: #222; }
.login {
  height: 30px;
  gap: 5px;
  padding: 0 2px 0 6px;
  border: 1px solid #b9543f;
  border-radius: 15px;
  background: #e37656;
  color: #fff;
}

/* ribbon */
.ribbon {
  display: flex;
  flex: none;
  align-items: center;
  height: 46px;
  padding-left: 19px;
  background: #f5f5f5;
}
.file-menu { gap: 7px; padding-right: 13px; }
.quick { display: flex; align-items: center; gap: 11px; padding: 0 12px; }
.quick button:last-child { margin-left: 6px; }
.menus { display: flex; gap: 31px; padding-left: 19px; }
.menus.wide { gap: 35px; padding: 0 22px 0 35px; }
.draw-tools { margin-left: 25px; color: #c4622c; }
.text-tools {
  height: 26px;
  margin-left: 24px;
  padding: 0 16px;
  border-radius: 13px;
  background: #ed8044;
  color: #fff;
  font-weight: 500;
}
.search {
  display: flex;
  align-items: center;
  width: 175px;
  height: 30px;
  margin-left: 12px;
  padding-left: 9px;
  gap: 2px;
  border-radius: 15px;
  background: #e9e9ec;
}
.search input { width: 140px; padding: 0; border: 0; background: none; font: inherit; }
.search input::placeholder { color: #444; opacity: 1; }
.ribbon-right { display: flex; align-items: center; gap: 14px; margin-left: auto; padding-right: 17px; }
.ribbon-right button { gap: 5px; }
.ribbon-right .rule { margin: 0 3px 0 -3px; }
.ribbon-right .fold { margin-left: 5px; }

/* work area */
.work {
  position: relative;
  display: flex;
  flex: 1;
  min-height: 0;
  box-shadow: inset 0 3px 3px -1px #cfcfcf;
}
.panel {
  position: relative;
  flex: none;
  width: 329px;
  border-right: 1px solid #cacaca;
}
.panel-head { display: flex; align-items: center; height: 57px; padding: 0 0 3px 9px; }
.collapse { margin-right: 90px; }
.panel-head .on {
  height: 25px;
  margin-left: 15px;
  padding: 0 13px;
  border-radius: 13px;
  background: #a2a2a2;
  color: #fff;
}
.thumbs { display: flex; flex-direction: column; gap: 21px; list-style: none; }
.thumbs li { display: flex; height: 147px; }
.mark { width: 40px; padding-top: 8px; }
.mark b { display: block; padding-left: 19px; font: 17px/20px "Liberation Serif", serif; }
.mark svg { margin: 5px 0 0 16px; }
.thumb { width: 264px; height: 147px; padding: 2px; border: 1px solid #b2b2b2; background: #f3f3f3; }
.thumb > svg { width: 258px; height: 141px; }
.thumb text { fill: #fff; font-family: "Noto Sans", "Noto Sans CJK SC", sans-serif; font-weight: 700; white-space: pre; }
.thumb .t { font-size: 44px; text-anchor: middle; }
.fig-text text {
  fill: #111;
  font-family: "Liberation Mono", "Noto Sans CJK SC", monospace;
  font-size: 30px;
  font-weight: 400;
}
.fig-text .fig-small { font-size: 28px; }
.fig-text .fig-dots { font-family: "Noto Sans CJK SC", sans-serif; font-weight: 700; }
.current b { color: #b8602c; }
.current .thumb { outline: 3px solid #c46a36; outline-offset: 0; border-color: #f3f3f3; border-radius: 3px; }
.add-slide { margin: 12px 0 0 153px; }
.panel-scroll { position: absolute; right: 5px; top: 210px; width: 10px; height: 49px; border-radius: 5px; background: #a6a6a6; }

.canvas { flex: 1; min-width: 0; padding: 55px 22px 0; border-bottom: 2px solid #dadada; }
.slide {
  position: relative;
  aspect-ratio: 1474 / 805;
  padding: 21px 0 0 21px;
  border: 1px solid #000;
  background: radial-gradient(circle at 42% 30%, #38383a 0, #302f30 55%, #232122 100%);
  box-shadow: 0 2px 8px 4px #ccc;
  color: #fff;
  font-weight: 700;
}
.chalk { position: absolute; inset: 0; width: 100%; height: 100%; }
.brand {
  position: relative;
  width: 214px;
  height: 48px;
  padding-left: 32px;
  background: linear-gradient(90deg, #f61800, #dc1602 50%, #780c02);
  font-size: 30px;
  line-height: 48px;
}
.slide h1 { position: relative; margin-top: 36px; padding-left: 457px; font-size: 45px; line-height: 60px; }
.text-box {
  position: relative;
  margin: 13px 0 0 136px;
  padding: 5px 0 0 12px;
  font-size: 36px;
  line-height: 44px;
  white-space: nowrap;
}
.bullet { display: flex; align-items: center; gap: 14px; }
.bullet i { width: 22px; height: 22px; margin-left: 2px; border-radius: 50%; background: #fff; }
.code { font-size: 37px; line-height: 40px; }
.item { padding-left: 52px; }
.item > span { float: left; width: 52px; margin-left: -52px; }
.small { font-size: 33px; line-height: 39px; }
.yellow { color: #fdf200; }
.blue { color: #0f9ae8; }
.text-box mark { background: #787878; color: #cfcfcf; }
.text-box em { color: #35c9a0; font-style: normal; }
.figure { position: absolute; left: 158px; top: 545px; width: 844px; height: 260px; }
.selection { position: absolute; left: 157px; top: 177px; width: 1179px; height: 607px; border: 1px dotted #000; }
.h { position: absolute; width: 13px; height: 13px; margin: -7px; border-radius: 50%; background: #fff; }
.tc, .bc { left: 50%; }
.tr, .mr, .br { left: 100%; }
.ml, .mr { top: 50%; }
.bl, .bc, .br { top: 100%; border: 1px solid #222; }
.rotate { position: absolute; left: 578px; top: -43px; }
.float-tools {
  position: absolute;
  left: 1351px;
  top: 180px;
  display: flex;
  flex-direction: column;
  gap: 13px;
}
.float-tools button { justify-content: center; width: 35px; height: 35px; background: #fff; }
.float-tools .minus { height: 22px; margin-bottom: -1px; background: none; }

.v-scroll {
  display: flex;
  flex: none;
  flex-direction: column;
  align-items: center;
  width: 17px;
  padding: 13px 0 32px;
  background: #dcdcdc;
}
.v-scroll i { width: 16px; height: 51px; margin-top: 164px; border: 1px solid #aaa; border-radius: 8px; background: #f6f6f6; }
.page-keys { margin-top: auto; }
.side {
  display: flex;
  flex: none;
  flex-direction: column;
  align-items: center;
  gap: 25px;
  width: 56px;
  padding-top: 13px;
  background: #ebebeb;
}
.side-more { display: flex; justify-content: center; width: 48px; height: 55px; margin-top: auto; padding-top: 29px; border-top: 1px solid #c4c4c4; }

.en-badge {
  position: absolute;
  left: 20px;
  top: 833px;
  display: flex;
  align-items: center;
  justify-content: center;
  width: 77px;
  height: 77px;
  border-radius: 50%;
  background: rgba(58, 58, 62, .93);
}
.en-badge text { fill: #3b3b3d; font-size: 16px; font-weight: 700; }
.ime {
  position: absolute;
  right: 0;
  top: 772px;
  display: flex;
  align-items: center;
  gap: 9px;
  width: 265px;
  height: 70px;
  padding-left: 4px;
  border-radius: 6px 0 0 6px;
  background: #f2f2f4;
}
.ime-logo {
  width: 69px;
  height: 58px;
  padding-top: 7px;
  border-radius: 10px;
  background: #fb2a20;
  color: #fff;
  font-size: 19px;
  font-weight: 500;
  line-height: 23px;
  text-align: center;
}
.ime-lang { margin: 0 0 0 4px; color: #d22b26; font-size: 25px; font-weight: 500; }
.ime svg:last-child { margin-left: -3px; }

/* status bar */
.status { display: flex; flex: none; align-items: center; height: 40px; background: #f5f5f5; color: #444; }
.status .rule { height: 28px; background: #e4e4e6; }
.s1 { width: 124px; padding-left: 12px; }
.s2 { width: 102px; padding-left: 12px; }
.s3 { width: 111px; gap: 7px; padding-left: 15px; }
.status-right { display: flex; align-items: center; gap: 12px; margin-left: auto; padding-right: 21px; }
.beauty { gap: 5px; margin-right: 2px; }
.beauty svg:last-child { margin-left: 6px; }
.notes { gap: 3px; }
.notes svg:last-child { margin-left: 1px; }
.comment { gap: 3px; }
.views { display: flex; align-items: center; gap: 11px; margin: 0 3px 0 14px; }
.views .on { justify-content: center; width: 28px; height: 30px; border-radius: 5px; background: #c2c2c2; }
.play { justify-content: center; width: 39px; height: 30px; border-radius: 5px; background: #fc8152; }
.status-right > svg { margin-left: -5px; }
.zoom { gap: 6px; margin: 0 3px 0 2px; }
.zoom span { margin-left: 3px; }
.zoom-bar { width: 172px; height: 16px; margin: 0 3px; appearance: none; background: linear-gradient(#666, #666) center / 100% 1px no-repeat; }
.zoom-bar::-webkit-slider-thumb { appearance: none; width: 16px; height: 16px; border: 2px solid #444; border-radius: 50%; background: #f5f5f5; }

/* taskbar */
.taskbar { display: flex; flex: none; height: 38px; padding-left: 2px; border-top: 1px solid #000; background: #1a1f26; }
.taskbar > button { justify-content: center; width: 40px; height: 37px; margin-right: 6px; }
.run { padding-top: 3px; border-bottom: 3px solid #76aee6; }
.taskbar > .run { width: 36px; margin: 0 5px; }
.taskbar > .active { width: 46px; margin: 0; background: #444a54; }
.en-ic { font-size: 8px; font-weight: 700; fill: #fff; }
.tray { display: flex; align-items: center; gap: 13px; margin-left: auto; padding-right: 4px; color: #fff; font-size: 17px; }
.tray time { margin: 0 11px; font-size: 15px; }
.tray i { width: 1px; height: 37px; margin-left: 12px; background: #555; }
```
